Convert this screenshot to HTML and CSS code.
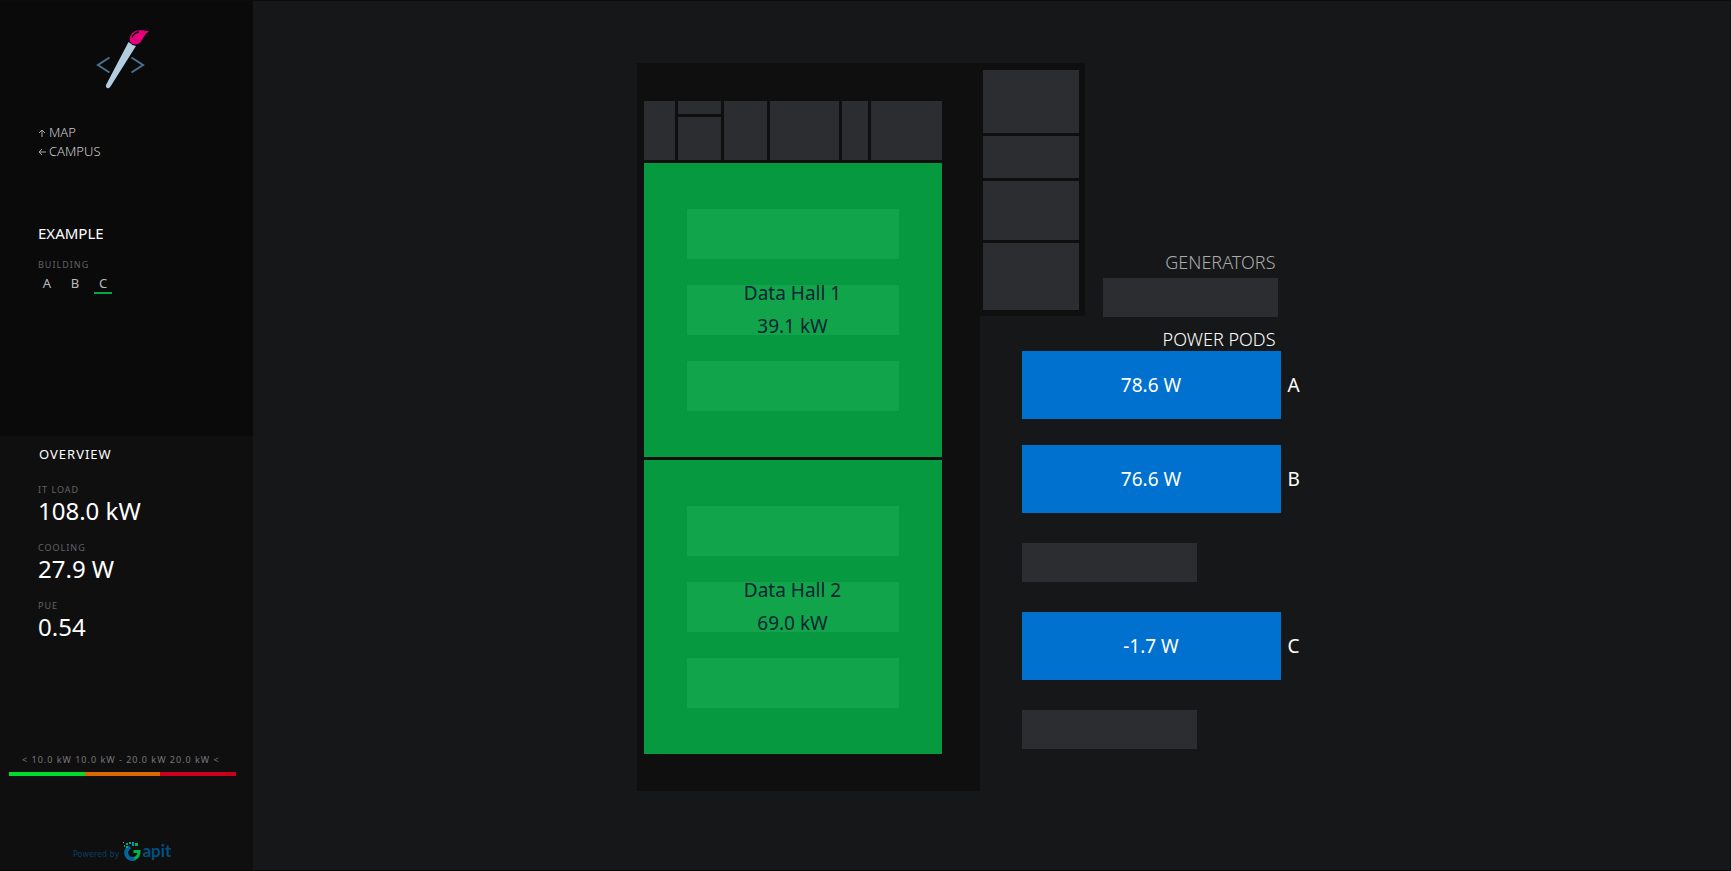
FILE: index.html
```html
<!DOCTYPE html>
<html lang="en">
<head>
<meta charset="utf-8">
<title>Example – Building C</title>
<link rel="stylesheet" href="styles.css">
</head>
<body>
<aside class="sidebar">
  <div class="site">
    <svg class="brush" width="48" height="60" viewBox="0 0 48 60" aria-hidden="true">
      <path d="M12.500 28.500 L1 36 L12.500 43.500 M34.500 28.500 L46 36 L34.500 43.500" fill="none" stroke="#4a7090" stroke-width="2"/>
      <path d="M31.500 13 Q34.500 16 39 17 L13.500 57.500 Q12 60 10 59 Q8.500 58 9 56 Z" fill="#b3cde0"/>
      <path d="M52 2.500 C46 5 45.500 15.500 38.500 15.500 C33 15.500 31 10.500 34 6 C37 0 46 .5 52 2.500 Z" fill="#e6007e"/>
      <path d="M35 8.500 Q37 3.500 42 3" fill="none" stroke="#0a0a0a" stroke-width="1.500"/>
    </svg>
    <nav class="links">
      <a href="#map"><svg width="8" height="8" viewBox="0 0 8 8" aria-hidden="true"><path d="M4 8V1M1 4L4 1L7 4"/></svg>MAP</a>
      <a href="#campus"><svg width="8" height="8" viewBox="0 0 8 8" aria-hidden="true"><path d="M8 4H1M4 1L1 4L4 7"/></svg>CAMPUS</a>
    </nav>
    <h1 class="name">EXAMPLE</h1>
    <div class="label">BUILDING</div>
    <nav class="buildings">
      <a href="#a">A</a>
      <a href="#b">B</a>
      <a class="current" href="#c">C</a>
    </nav>
  </div>
  <div class="overview">
    <h2 class="heading">OVERVIEW</h2>
    <dl class="stats">
      <dt class="label">IT LOAD</dt><dd>108.0 kW</dd>
      <dt class="label">COOLING</dt><dd>27.9 W</dd>
      <dt class="label">PUE</dt><dd>0.54</dd>
    </dl>
    <div class="legend">
      <div class="legend-text">&lt; 10.0 kW 10.0 kW - 20.0 kW 20.0 kW &lt;</div>
      <div class="scale"><span class="low"></span><span class="mid"></span><span class="high"></span></div>
    </div>
    <div class="powered">
      <span>Powered by</span>
      <span class="brand">
        <svg width="19" height="20" viewBox="0 0 19 20" aria-hidden="true">
          <path d="M7 6 A6 6 0 0 0 12 17.500" fill="none" stroke="#0068a0" stroke-width="4"/>
          <path d="M10.500 10.500 H16 Q16 16 11.500 17.500" fill="none" stroke="#00b84a" stroke-width="3"/>
          <path d="M12 2H15V5H12Z M6 1H8V3H6Z M3 5H5V7H3Z" fill="#00b84a"/>
          <path d="M9 1H11V5H9Z M3 2H5V4H3Z M1 4H2V6H1Z" fill="#0096c8"/>
          <path d="M0 1H1V2H0Z" fill="#a5cf3a"/>
        </svg>
        <b>apit</b>
      </span>
    </div>
  </div>
</aside>
<main class="main">
  <div class="plan">
    <section class="building" aria-label="Building C">
      <div class="rooms">
        <i class="room"></i>
        <div class="split"><i class="room"></i><i class="room"></i></div>
        <i class="room"></i><i class="room"></i><i class="room"></i><i class="room"></i>
      </div>
      <div class="hall">
        <i class="rack"></i>
        <div class="rack"><span>Data Hall 1</span><span>39.1 kW</span></div>
        <i class="rack"></i>
      </div>
      <div class="hall">
        <i class="rack"></i>
        <div class="rack"><span>Data Hall 2</span><span>69.0 kW</span></div>
        <i class="rack"></i>
      </div>
    </section>
    <div class="wing"><i class="room"></i><i class="room"></i><i class="room"></i><i class="room"></i></div>
    <section class="power">
      <h2 class="title dim">GENERATORS</h2>
      <i class="room unit generator"></i>
      <h2 class="title pods">POWER PODS</h2>
      <div class="pod-row"><div class="pod">78.6 W</div><span>A</span></div>
      <div class="pod-row"><div class="pod">76.6 W</div><span>B</span></div>
      <i class="room unit"></i>
      <div class="pod-row"><div class="pod">-1.7 W</div><span>C</span></div>
      <i class="room unit"></i>
    </section>
  </div>
</main>
</body>
</html>
```
FILE: styles.css
```css
* { box-sizing: border-box; }
body {
  margin: 0;
  min-height: 100vh;
  display: flex;
  background: #161719;
  border-top: 1px solid #0c0c0d;
  border-bottom: 1px solid #0c0809;
  border-right: 1px solid #101112;
  color: #fff;
  font-family: "Noto Sans", "Open Sans", sans-serif;
}
h1, h2, dl, dd { margin: 0; font-weight: 400; }
a { color: inherit; text-decoration: none; }

.sidebar {
  flex: 0 0 253px;
  display: flex;
  flex-direction: column;
  background: #0f0f0f;
}
.site { height: 435px; padding: 28px 38px; background: #0a0a0a; }
.brush { display: block; margin-left: 59px; overflow: visible; }
.links { margin-top: 34px; color: #ccc; font-size: 13px; font-weight: 300; line-height: 19px; }
.links a { display: flex; align-items: center; gap: 3px; }
.links path { fill: none; stroke: #aaa; }
.name { margin-top: 62px; font-size: 15px; line-height: 20px; }
.label { color: #626265; font-size: 9px; line-height: 14px; letter-spacing: 1px; }
.name + .label { margin-top: 15px; }
.buildings { display: flex; gap: 10px; margin-top: 2px; font-size: 13px; line-height: 18px; }
.buildings a { width: 18px; height: 20px; color: #bbb; text-align: center; }
.buildings .current { border-bottom: 2px solid #00a84a; }

.overview { flex: 1; display: flex; flex-direction: column; padding: 8px 9px 9px; }
.heading { padding-left: 30px; font-size: 13px; line-height: 20px; letter-spacing: 1px; }
.stats { margin-top: 19px; padding-left: 29px; }
.stats dd { margin-bottom: 16px; font-size: 24px; line-height: 28px; }
.legend { margin-top: auto; }
.legend-text { padding-left: 13px; color: #77777a; font-size: 9px; line-height: 12px; letter-spacing: 1px; white-space: nowrap; }
.scale { display: flex; width: 227px; height: 4px; margin-top: 6px; }
.scale span { flex: 1; }
.low { background: #00dc2c; }
.mid { background: #dc6900; }
.high { background: #c8001e; }
.powered {
  display: flex;
  align-items: flex-end;
  gap: 4px;
  margin: 65px 0 0 64px;
  color: #073f66;
  font: 8px/12px "DejaVu Sans", sans-serif;
}
.brand { display: flex; align-items: center; color: #005080; }
.brand b { font: 700 17px/20px Lato, sans-serif; }

.main { flex: 1; padding-top: 62px; }
.plan { display: grid; grid-template-columns: 343px 105px 262px; justify-content: center; align-items: start; }
.room { display: block; background: #2c2d31; }
.building { display: flex; flex-direction: column; gap: 3px; padding: 38px 38px 37px 7px; background: #0f0f0f; }
.rooms { display: grid; grid-template-columns: 31fr 43fr 43fr 69fr 26fr 70fr; gap: 3px; height: 59px; }
.split { display: grid; grid-template-rows: 13px 1fr; gap: 3px; }
.hall {
  display: flex;
  flex-direction: column;
  justify-content: center;
  gap: 26px;
  height: 294px;
  padding: 0 43px;
  background: #069940;
}
.rack {
  display: flex;
  flex-direction: column;
  justify-content: center;
  height: 50px;
  background: #11a44b;
  color: #0a2533;
  font-size: 19px;
  line-height: 33px;
  text-align: center;
}
.wing { display: grid; grid-template-rows: 63px 42px 59px 67px; gap: 3px; padding: 7px 6px 6px 3px; background: #0f0f0f; }

.power { display: flex; flex-direction: column; align-items: flex-start; margin: 187px 0 0 -63px; font-size: 19px; }
.title { width: 254px; font-size: 18px; font-weight: 300; line-height: 24px; text-align: right; }
.dim { color: #aaa; }
.generator { margin: 4px 0 0 81px; }
.unit { width: 175px; height: 39px; }
.pods { margin-top: 10px; }
.pod-row { display: flex; align-items: center; gap: 7px; }
.pod { width: 259px; height: 68px; background: #0071ce; line-height: 68px; text-align: center; }
.pod-row + .pod-row { margin-top: 26px; }
.pod-row + .unit { margin-top: 30px; }
.unit + .pod-row { margin-top: 30px; }
```
